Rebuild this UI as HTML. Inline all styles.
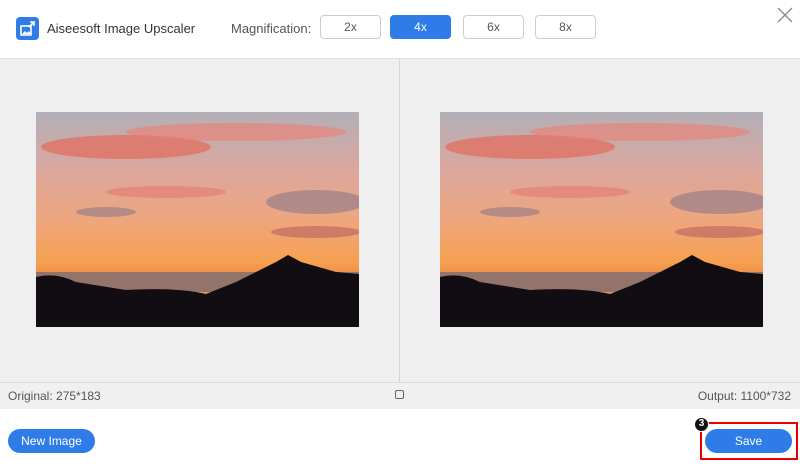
<!DOCTYPE html>
<html><head><meta charset="utf-8"><style>
*{margin:0;padding:0;box-sizing:border-box}
body{width:800px;height:469px;background:#fff;font-family:"Liberation Sans",sans-serif;position:relative;overflow:hidden;color:#333}
.hdr{position:absolute;left:0;top:0;width:800px;height:58px;background:#fff}
.logo{position:absolute;left:16px;top:17px;width:23px;height:23px;background:#2f7be8;border-radius:4px}
.title{position:absolute;left:47px;top:21px;font-size:13px;color:#333}
.mag{position:absolute;left:231px;top:21px;font-size:13px;color:#555}
.b{position:absolute;top:15px;width:61px;height:24px;border:1px solid #ccc;border-radius:4px;font-size:12px;color:#555;text-align:center;line-height:22px;background:#fff}
.b.on{background:#2f7be8;border-color:#2f7be8;color:#fff}
.main{position:absolute;left:0;top:58px;width:800px;height:324px;background:#efefef;border-top:1px solid #e2e2e2}
.div{position:absolute;left:399px;top:58px;width:1px;height:324px;background:#d6d6d6}
.info{position:absolute;left:0;top:382px;width:800px;height:27px;background:#f0f0f0;border-top:1px solid #ddd;font-size:12px;color:#555}
.img{position:absolute;top:112px;width:323px;height:215px}
.btn{position:absolute;height:24px;border-radius:12px;background:#2f7be8;color:#fff;font-size:12px;text-align:center;line-height:24px}
</style></head><body>
<div class="hdr">
<div class="logo"><svg width="23" height="23"><rect x="5" y="9" width="10" height="9" fill="none" stroke="#fff" stroke-width="1.6"/><path d="M6 17l3-3 2 2 2-2 2 3z" fill="#fff"/><path d="M13 10l5-5M14 5h4v4" stroke="#fff" stroke-width="1.6" fill="none"/></svg></div>
<div class="title">Aiseesoft Image Upscaler</div>
<div class="mag">Magnification:</div>
<div class="b" style="left:320px">2x</div>
<div class="b on" style="left:390px">4x</div>
<div class="b" style="left:463px">6x</div>
<div class="b" style="left:535px">8x</div>
<svg style="position:absolute;left:777px;top:7px" width="16" height="16"><path d="M1 1l14 14M15 1L1 15" stroke="#888" stroke-width="1.3"/></svg>
</div>
<div class="main"></div>
<div class="div"></div>
<svg width="0" height="0" style="position:absolute"><defs>
<linearGradient id="sky" x1="0" y1="0" x2="0" y2="1">
<stop offset="0" stop-color="#b2afb8"/><stop offset=".25" stop-color="#d9a7a0"/><stop offset=".5" stop-color="#eea67e"/><stop offset=".7" stop-color="#f6a050"/><stop offset=".75" stop-color="#f0904a"/></linearGradient>
<symbol id="pic" viewBox="0 0 323 215">
<rect width="323" height="215" fill="url(#sky)"/>
<ellipse cx="90" cy="35" rx="85" ry="12" fill="#e46a5a" opacity=".7"/>
<ellipse cx="200" cy="20" rx="110" ry="9" fill="#ec7f70" opacity=".6"/>
<ellipse cx="130" cy="80" rx="60" ry="6" fill="#e7706a" opacity=".5"/>
<ellipse cx="280" cy="90" rx="50" ry="12" fill="#8c7888" opacity=".6"/>
<ellipse cx="70" cy="100" rx="30" ry="5" fill="#8f7a86" opacity=".6"/>
<ellipse cx="280" cy="120" rx="45" ry="6" fill="#b86060" opacity=".6"/>
<rect y="160" width="323" height="20" fill="#6a6878" opacity=".7"/>
<path d="M0 165 Q20 160 40 170 L90 178 Q140 175 170 182 L200 170 L240 150 L252 143 L265 150 L300 160 L323 162 V215 H0z" fill="#120d12"/>
</symbol></defs></svg>
<svg class="img" style="left:36px"><use href="#pic"/></svg>
<svg class="img" style="left:440px"><use href="#pic"/></svg>
<div class="info"><span style="position:absolute;left:8px;top:6px">Original: 275*183</span>
<span style="position:absolute;left:395px;top:7px;width:9px;height:9px;border:1px solid #666;border-radius:2px"></span>
<span style="position:absolute;right:9px;top:6px">Output: 1100*732</span></div>
<div class="btn" style="left:8px;top:429px;width:87px">New Image</div>
<div style="position:absolute;left:700px;top:422px;width:98px;height:38px;border:2px solid #e00"></div>
<div class="btn" style="left:705px;top:429px;width:87px">Save</div>
<div style="position:absolute;left:694px;top:417px;width:15px;height:15px;border-radius:50%;background:#111;border:1.5px solid #fff;color:#fff;font-size:10px;font-weight:bold;text-align:center;line-height:12px">3</div>
</body></html>
